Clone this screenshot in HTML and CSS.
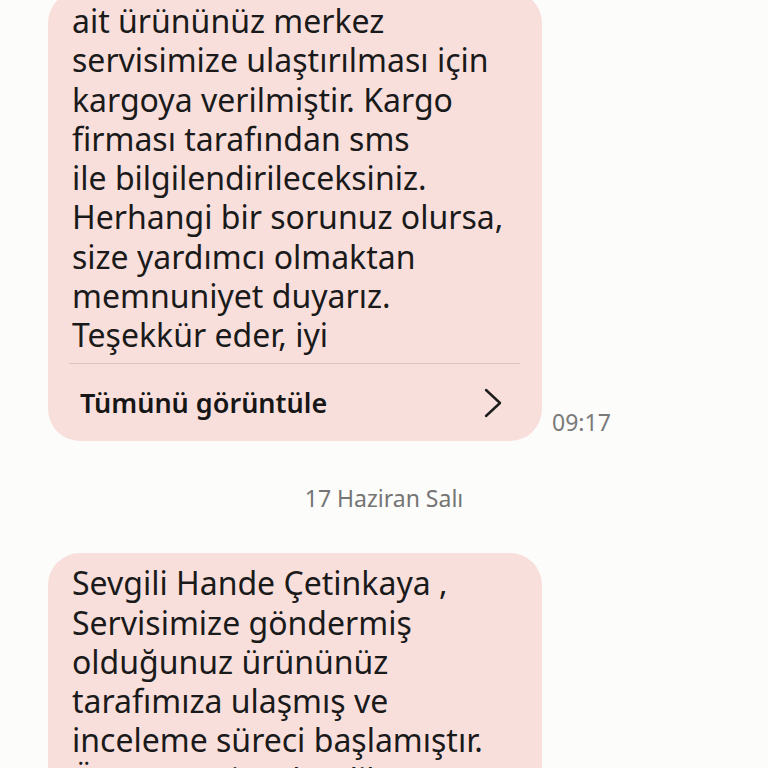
FILE: index.html
```html
<!DOCTYPE html>
<html lang="tr">
<head>
<meta charset="utf-8">
<title>Mesajlar</title>
<link rel="stylesheet" href="styles.css">
</head>
<body>
<div class="thread">
  <div class="row first">
    <div class="bubble">
      <p class="msg">ait ürününüz merkez<br>servisimize ulaştırılması için<br>kargoya verilmiştir. Kargo<br>firması tarafından sms<br>ile bilgilendirileceksiniz.<br>Herhangi bir sorunuz olursa,<br>size yardımcı olmaktan<br>memnuniyet duyarız.<br>Teşekkür eder, iyi</p>
      <div class="divider"></div>
      <div class="more">
        <span class="more-label">Tümünü görüntüle</span>
        <svg class="chev" width="22" height="30" viewBox="0 0 22 30"><path d="M4 2 L18 15 L4 28" fill="none" stroke="#1c1c1c" stroke-width="2.4" stroke-linecap="round" stroke-linejoin="round"/></svg>
      </div>
    </div>
    <span class="time">09:17</span>
  </div>
  <div class="date">17 Haziran Salı</div>
  <div class="row">
    <div class="bubble">
      <p class="msg">Sevgili Hande Çetinkaya ,<br>Servisimize göndermiş<br>olduğunuz ürününüz<br>tarafımıza ulaşmış ve<br>inceleme süreci başlamıştır.<br>Ürününüz incelendikten sonra</p>
    </div>
  </div>
</div>
</body>
</html>
```
FILE: styles.css
```css
html, body {
  margin: 0;
  padding: 0;
  background: #fcfcfa;
  height: 768px;
  overflow: hidden;
}
body {
  font-family: "Noto Sans", "Open Sans", sans-serif;
  color: #1a1a1a;
}
.thread {
  display: flex;
  flex-direction: column;
  padding-left: 48px;
}
.row {
  display: flex;
  align-items: flex-end;
  gap: 10px;
}
.row.first {
  margin-top: -9px;
}
.bubble {
  width: 494px;
  box-sizing: border-box;
  background: #f8dfdc;
  border-radius: 32px;
  padding: 10px 0 0 0;
}
.msg {
  margin: 0;
  padding: 0 24px;
  font-size: 32px;
  line-height: 39.25px;
  white-space: nowrap;
}
.divider {
  height: 1px;
  background: #d9c3c0;
  margin: 9px 22px 0 21px;
}
.more {
  height: 77px;
  display: flex;
  align-items: center;
  justify-content: space-between;
  padding: 0 38px 0 32px;
}
.more-label {
  font-size: 27px;
  font-weight: 600;
  color: #161616;
}
.chev {
  display: block;
}
.time {
  font-size: 23px;
  color: #7a7a7a;
  margin-bottom: 3px;
}
.date {
  text-align: center;
  font-size: 23px;
  color: #757575;
  margin-left: -48px;
  padding: 41px 0 39px;
}
```
